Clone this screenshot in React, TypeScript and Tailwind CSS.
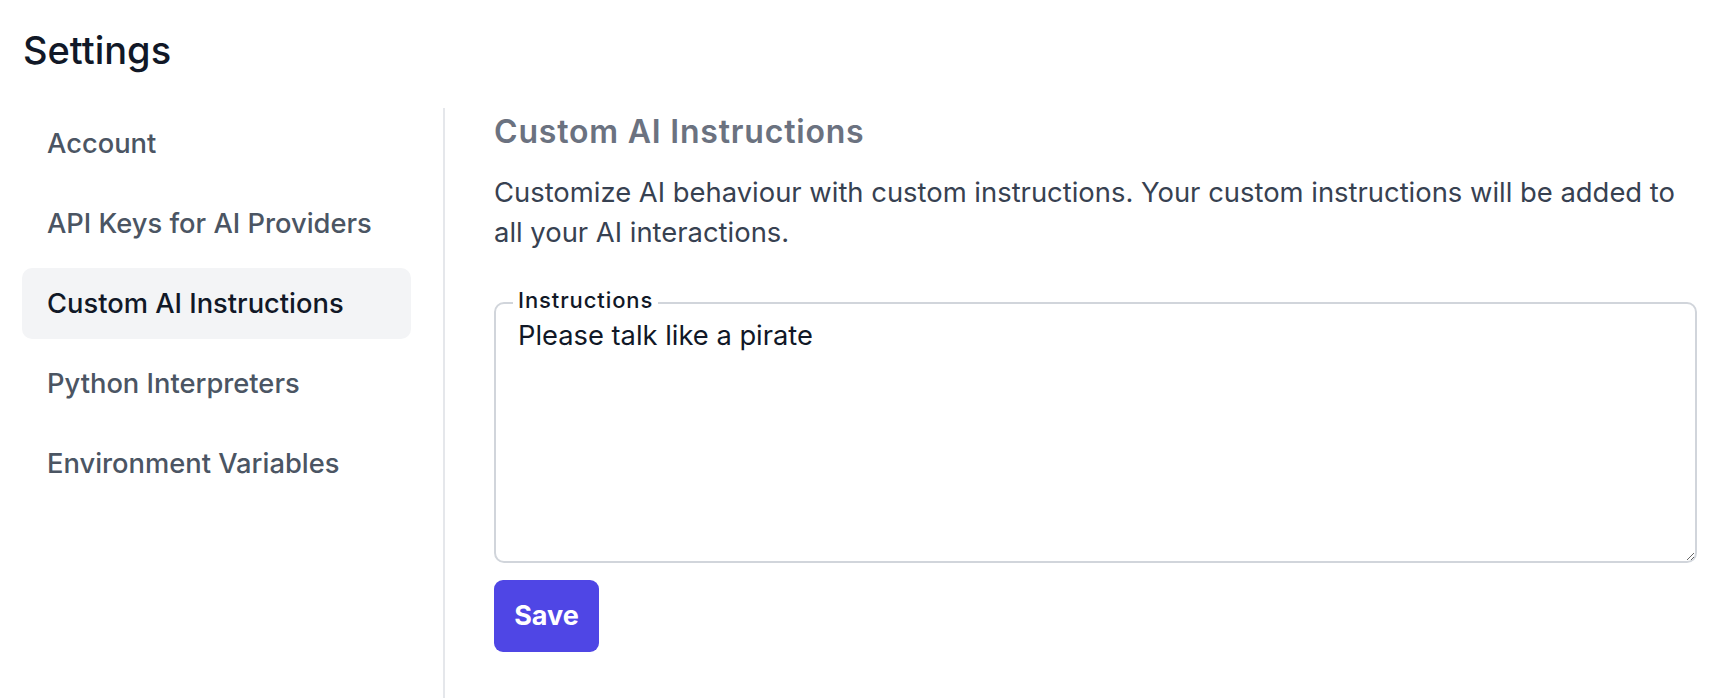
import React from "react";

const items = [
  "Account",
  "API Keys for AI Providers",
  "Custom AI Instructions",
  "Python Interpreters",
  "Environment Variables",
];

export default function App() {
  return (
    <div
      className="h-screen overflow-hidden bg-white pl-[22px] pr-[19px] flex flex-col"
      style={{ fontFamily: "Inter, 'Noto Sans', sans-serif" }}
    >
      <h1 className="pt-[28px] pl-[1px] text-[38px] leading-[45px] font-medium text-[#111827]">
        Settings
      </h1>
      <div className="mt-[35px] flex flex-1 min-h-0">
        <nav className="w-[423px] shrink-0 pr-[32px] border-r-2 border-[#e5e7eb] flex flex-col gap-[9px]">
          {items.map((it) => {
            const active = it === "Custom AI Instructions";
            return (
              <div
                key={it}
                className={
                  active
                    ? "h-[71px] pl-[25px] pt-[1px] rounded-[10px] flex items-center text-[27.3px] font-medium bg-[#f3f4f6] text-[#111827]"
                    : "h-[71px] pl-[25px] pt-[1px] rounded-[10px] flex items-center text-[27.3px] font-medium text-[#4b5563]"
                }
              >
                {it}
              </div>
            );
          })}
        </nav>
        <main className="flex-1 min-w-0 pl-[49px] pt-[4px]">
          <h2 className="text-[32px] leading-[40px] font-semibold tracking-wide text-[#6b7280]">
            Custom AI Instructions
          </h2>
          <p className="mt-[20px] pr-[12px] text-[27.4px] leading-[40px] text-[#374151]">
            Customize AI behaviour with custom instructions. Your custom instructions will be added to all your AI
            interactions.
          </p>
          <fieldset className="mt-[34px] border-2 border-[#d1d5db] rounded-[10px]">
            <legend className="ml-[17px] px-[5px] pb-[6px] text-[22px] leading-[28px] tracking-[0.9px] font-medium text-[#111827]">
              Instructions
            </legend>
            <textarea
              className="block w-full h-[241px] pl-[22px] pr-[22px] text-[27.3px] leading-[32px] text-[#111827] bg-transparent outline-none resize-y"
              defaultValue="Please talk like a pirate"
            />
          </fieldset>
          <button className="mt-[17px] w-[105px] h-[72px] rounded-[9px] bg-[#4f46e5] text-white text-[27px] font-bold">
            Save
          </button>
        </main>
      </div>
    </div>
  );
}
